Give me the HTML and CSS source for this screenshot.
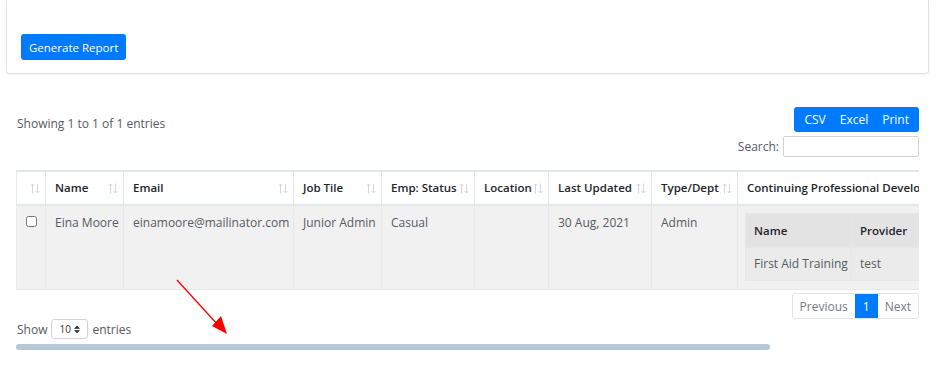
FILE: index.html
```html
<!DOCTYPE html>
<html lang="en">
<head>
    <meta charset="UTF-8">
    <meta name="viewport" content="width=device-width, initial-scale=1.0">
    <title>Employee Report</title>
    <link rel="stylesheet" href="styles.css">
</head>
<body>

    <!-- Report filter card -->
    <div class="card">
        <button class="btn-primary">Generate Report</button>
    </div>

    <div class="report">
        <div class="top-row">
            <div class="info">Showing 1 to 1 of 1 entries</div>
            <div class="tools">
                <div class="btn-group">
                    <button>CSV</button>
                    <button>Excel</button>
                    <button>Print</button>
                </div>
                <label class="search">Search: <input type="text"></label>
            </div>
        </div>

        <div class="table-wrap">
            <table class="data">
                <colgroup>
                    <col style="width: 29px">
                    <col style="width: 78px">
                    <col style="width: 170px">
                    <col style="width: 88px">
                    <col style="width: 93px">
                    <col style="width: 74px">
                    <col style="width: 103px">
                    <col style="width: 86px">
                    <col style="width: 330px">
                </colgroup>
                <thead>
                    <tr>
                        <th class="sort"><svg class="sort-icon" width="10" height="11" viewBox="0 0 10 11"><path d="M2.5 10.5V1M0.5 3L2.5 1L4.5 3M7.5 0.5V10M5.5 8L7.5 10L9.5 8" fill="none" stroke="currentColor" stroke-width="1"/></svg></th>
                        <th class="sort">Name<svg class="sort-icon" width="10" height="11" viewBox="0 0 10 11"><path d="M2.5 10.5V1M0.5 3L2.5 1L4.5 3M7.5 0.5V10M5.5 8L7.5 10L9.5 8" fill="none" stroke="currentColor" stroke-width="1"/></svg></th>
                        <th class="sort">Email<svg class="sort-icon" width="10" height="11" viewBox="0 0 10 11"><path d="M2.5 10.5V1M0.5 3L2.5 1L4.5 3M7.5 0.5V10M5.5 8L7.5 10L9.5 8" fill="none" stroke="currentColor" stroke-width="1"/></svg></th>
                        <th class="sort">Job Tile<svg class="sort-icon" width="10" height="11" viewBox="0 0 10 11"><path d="M2.5 10.5V1M0.5 3L2.5 1L4.5 3M7.5 0.5V10M5.5 8L7.5 10L9.5 8" fill="none" stroke="currentColor" stroke-width="1"/></svg></th>
                        <th class="sort">Emp: Status<svg class="sort-icon" width="10" height="11" viewBox="0 0 10 11"><path d="M2.5 10.5V1M0.5 3L2.5 1L4.5 3M7.5 0.5V10M5.5 8L7.5 10L9.5 8" fill="none" stroke="currentColor" stroke-width="1"/></svg></th>
                        <th class="sort">Location<svg class="sort-icon" width="10" height="11" viewBox="0 0 10 11"><path d="M2.5 10.5V1M0.5 3L2.5 1L4.5 3M7.5 0.5V10M5.5 8L7.5 10L9.5 8" fill="none" stroke="currentColor" stroke-width="1"/></svg></th>
                        <th class="sort">Last Updated<svg class="sort-icon" width="10" height="11" viewBox="0 0 10 11"><path d="M2.5 10.5V1M0.5 3L2.5 1L4.5 3M7.5 0.5V10M5.5 8L7.5 10L9.5 8" fill="none" stroke="currentColor" stroke-width="1"/></svg></th>
                        <th class="sort">Type/Dept<svg class="sort-icon" width="10" height="11" viewBox="0 0 10 11"><path d="M2.5 10.5V1M0.5 3L2.5 1L4.5 3M7.5 0.5V10M5.5 8L7.5 10L9.5 8" fill="none" stroke="currentColor" stroke-width="1"/></svg></th>
                        <th>Continuing Professional Development</th>
                    </tr>
                </thead>
                <tbody>
                    <tr>
                        <td class="check"><input type="checkbox"></td>
                        <td>Eina Moore</td>
                        <td>einamoore@mailinator.com</td>
                        <td>Junior Admin</td>
                        <td>Casual</td>
                        <td></td>
                        <td>30 Aug, 2021</td>
                        <td>Admin</td>
                        <td class="cpd">
                            <table class="nested">
                                <colgroup>
                                    <col style="width: 106px">
                                    <col style="width: 90px">
                                    <col style="width: 110px">
                                </colgroup>
                                <thead>
                                    <tr>
                                        <th>Name</th>
                                        <th>Provider</th>
                                        <th>Date</th>
                                    </tr>
                                </thead>
                                <tbody>
                                    <tr>
                                        <td>First Aid Training</td>
                                        <td>test</td>
                                        <td>01 Sep, 2021</td>
                                    </tr>
                                </tbody>
                            </table>
                        </td>
                    </tr>
                </tbody>
            </table>
        </div>

        <div class="pager-row">
            <div class="pager">
                <a class="page">Previous</a>
                <a class="page active">1</a>
                <a class="page">Next</a>
            </div>
        </div>

        <div class="length">
            <span>Show</span>
            <span class="select">
                <span>10</span>
                <svg width="6" height="9" viewBox="0 0 6 9"><path d="M0.5 3.5L3 1L5.5 3.5ZM0.5 5.5L3 8L5.5 5.5Z" fill="#333" stroke="#333" stroke-width="0.6" stroke-linejoin="round"/></svg>
            </span>
            <span>entries</span>
        </div>

        <div class="scroll-thumb"></div>
    </div>

    <!-- annotation arrow -->
    <svg class="arrow" width="943" height="371" viewBox="0 0 943 371">
        <line x1="177" y1="280" x2="218" y2="325" stroke="#ff0000" stroke-width="1.3"/>
        <polygon points="227,334 212,326 221,316" fill="#ff0000"/>
    </svg>

</body>
</html>
```

FILE: styles.css
```css
body {
    margin: 0;
    background: #fff;
    font-family: "Open Sans", "Liberation Sans", sans-serif;
    font-size: 12px;
    color: #555b63;
    position: relative;
}

.card {
    margin: 0 14px 0 6px;
    padding: 34px 14px 13px;
    border: 1px solid #e2e2e2;
    border-top: none;
    border-radius: 0 0 4px 4px;
    box-shadow: 0 1px 2px rgba(0, 0, 0, 0.05);
}

.btn-primary {
    font-family: inherit;
    font-size: 11.5px;
    color: #fff;
    background: #007bff;
    border: none;
    border-radius: 3px;
    height: 26px;
    padding: 0 8px;
}

.report {
    padding: 33px 24px 0 16px;
}

.top-row {
    display: flex;
    justify-content: space-between;
}

.info {
    padding-top: 8px;
    padding-left: 1px;
}

.tools {
    display: flex;
    flex-direction: column;
    align-items: flex-end;
}

.btn-group {
    display: flex;
    background: #007bff;
    border-radius: 3px;
    height: 25px;
    padding: 0 3px;
}

.btn-group button {
    font-family: inherit;
    font-size: 12px;
    color: #fff;
    background: none;
    border: none;
    padding: 0 7px;
}

.search {
    margin-top: 4px;
    display: flex;
    align-items: center;
    gap: 4px;
}

.search input {
    width: 130px;
    height: 17px;
    border: 1px solid #cfd4d9;
    border-radius: 2px;
    margin: 0;
    padding: 1px 2px;
}

.table-wrap {
    margin-top: 13px;
    overflow: hidden;
    width: 903px;
}

.data {
    border-collapse: collapse;
    table-layout: fixed;
    width: 1051px;
}

.data > thead > tr > th {
    text-align: left;
    font-size: 11.5px;
    font-weight: 600;
    color: #22262b;
    padding: 8px 9px 8px 9px;
    line-height: 16px;
    border: 1px solid #e3e6ea;
    border-top: 2px solid #e3e6ea;
    border-bottom: 2px solid #e3e6ea;
    white-space: nowrap;
    overflow: hidden;
    background: #fff;
}

.data > thead > tr > th:first-child,
.data > tbody > tr > td:first-child {
    border-left: 1px solid #e8eaed;
}

.data > thead > tr > th.sort {
    position: relative;
    padding-right: 18px;
}

.sort-icon {
    position: absolute;
    right: 5px;
    top: 11px;
    color: #d3d7db;
}

.data > tbody > tr > td {
    background: #f1f1f1;
    vertical-align: top;
    padding: 8px 9px 8px 9px;
    line-height: 18px;
    border: 1px solid #e6e8eb;
    white-space: nowrap;
}

.data > tbody > tr > td.cpd {
    padding: 7px 8px 8px 7px;
}

.check input {
    margin: 2px 0 0 0;
    width: 11px;
    height: 11px;
}

.nested {
    border-collapse: collapse;
    table-layout: fixed;
    width: 306px;
}

.nested th,
.nested td {
    text-align: left;
    padding: 8px 8px;
    line-height: 16px;
    border: 1px solid #e6e6e6;
}

.nested th {
    background: #e3e3e3;
    color: #22262b;
    font-size: 11.5px;
    font-weight: 600;
    padding: 9px 8px 8px;
}

.nested td {
    background: #ebebeb;
}

.pager-row {
    display: flex;
    justify-content: flex-end;
    margin-top: 3px;
}

.pager {
    display: flex;
    border: 1px solid #e1e4e8;
    border-radius: 3px;
    height: 24px;
}

.page {
    display: flex;
    align-items: center;
    padding: 0 7px;
    color: #737a82;
}

.page.active {
    background: #007bff;
    color: #fff;
    padding: 0 8px;
}

.length {
    display: flex;
    align-items: center;
    gap: 4px;
    padding-left: 1px;
}

.select {
    display: inline-flex;
    align-items: center;
    justify-content: space-between;
    box-sizing: border-box;
    width: 37px;
    height: 20px;
    padding: 0 7px 0 7px;
    border: 1px solid #cfd4d9;
    border-radius: 3px;
    font-size: 10px;
    color: #333;
}

.scroll-thumb {
    margin-top: 5px;
    width: 754px;
    height: 6px;
    border-radius: 3px;
    background: #b7c7d3;
}

.arrow {
    position: absolute;
    left: 0;
    top: 0;
    pointer-events: none;
}
```
